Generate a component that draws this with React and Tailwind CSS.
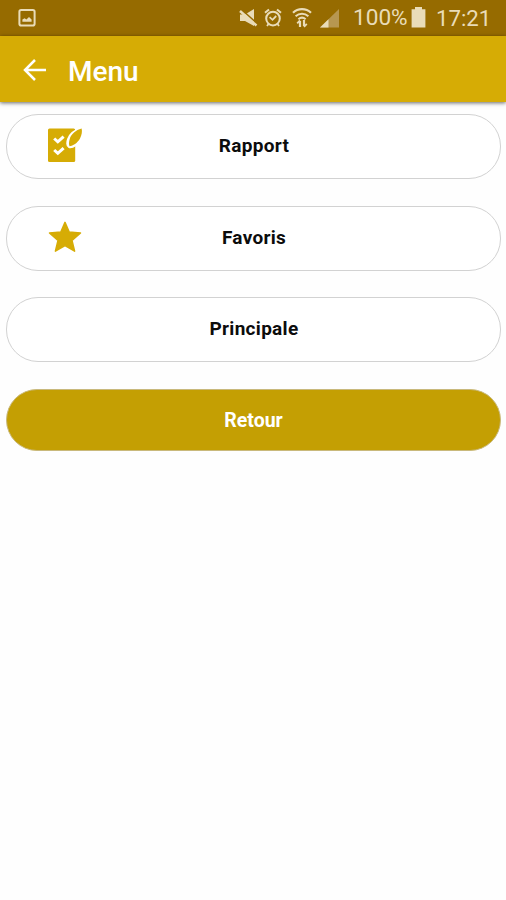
function Picture_Icon() {
  return (
    <svg className="w-[18px] h-[18px]" viewBox="0 0 18 18" fill="none">
      <rect x="1.4" y="1" width="15.2" height="15.6" rx="1.8" stroke="#e9dcb8" strokeWidth="2" />
      <path d="M4.4 12.8V10.6L6.6 9.2L8.4 10.6L11 8L13.6 10.4V12.8Z" fill="#e9dcb8" />
    </svg>
  );
}

function Mute_Icon() {
  return (
    <svg className="w-[19px] h-[20px]" viewBox="0 0 19 20" fill="none">
      <path d="M1 6.5H6L15 1V18L6 13H1Z" fill="#e9dcb8" />
      <path d="M2 1L18 15.5" stroke="#966b00" strokeWidth="1.6" />
      <path d="M1 3L17.5 17.5" stroke="#e9dcb8" strokeWidth="2.4" />
    </svg>
  );
}

function Alarm_Icon() {
  return (
    <svg className="w-[18px] h-[20px]" viewBox="0 0 18 20" fill="none" stroke="#e9dcb8">
      <circle cx="9" cy="10.6" r="6.8" strokeWidth="2" />
      <path d="M1 4.8L5 1.4M17 4.8L13 1.4" strokeWidth="2" />
      <path d="M5.6 9.2L8.5 11.8L12.2 8" strokeWidth="1.8" />
      <path d="M4.5 16L3 18M13.5 16L15 18" strokeWidth="1.8" />
    </svg>
  );
}

function Wifi_Icon() {
  return (
    <svg className="w-[20px] h-[20px]" viewBox="0 0 20 20" fill="none" stroke="#e9dcb8">
      <path d="M1 4.8C6 0 14 0 19 4.8" strokeWidth="2.2" />
      <path d="M3.6 8.2C7.3 4.8 12.7 4.8 16.4 8.2" strokeWidth="2" />
      <path d="M6.4 11.2C8.6 9.3 11.4 9.3 13.6 11.2" strokeWidth="2" />
      <path d="M8 19V13M12 12V18" strokeWidth="2.2" />
      <path d="M5.2 15.4L8 12.4M12 18.8L14.8 15.8" strokeWidth="1.8" />
    </svg>
  );
}

function Signal_Icon() {
  return (
    <svg className="w-[20px] h-[19px]" viewBox="0 0 20 19">
      <path d="M0 18.5L19 0V18.5Z" fill="#b79750" />
      <path d="M0 18.5L8.5 10.2V18.5Z" fill="#e9dcb8" />
    </svg>
  );
}

function Battery_Icon() {
  return (
    <svg className="w-[15px] h-[22px]" viewBox="0 0 15 22">
      <path d="M4 1H11V3.2H14.4V21.5H0.6V3.2H4Z" fill="#e9dcb8" />
    </svg>
  );
}

function Status_Bar() {
  return (
    <div className="h-[36px] flex items-center bg-[#966b00] pl-[18px] text-[#e9dcb8]">
      <Picture_Icon />
      <div className="ml-[203px] flex items-center">
        <Mute_Icon />
        <div className="ml-[6px]"><Alarm_Icon /></div>
        <div className="ml-[10px]"><Wifi_Icon /></div>
        <div className="ml-[8px]"><Signal_Icon /></div>
      </div>
      <span className="ml-[13px] mt-[1px] w-[55px] whitespace-nowrap text-[22.6px] leading-none">100%</span>
      <div className="ml-[3px] -mt-[2px]"><Battery_Icon /></div>
      <span className="ml-[10px] whitespace-nowrap text-[22.2px] leading-none">17:21</span>
    </div>
  );
}

function Header() {
  return (
    <div className="h-[66px] flex items-center bg-[#d6ac05] pl-[23px] shadow-[0_1px_4px_rgba(0,0,0,0.6)]">
      <svg className="mt-[1px] w-[24px] h-[22px]" viewBox="0 0 24 22" fill="none" stroke="white" strokeWidth="2.5">
        <path d="M23 11H2M12 1L2 11L12 21" />
      </svg>
      <h1 className="ml-[21px] mt-[5px] text-[28px] leading-none font-medium text-white">Menu</h1>
    </div>
  );
}

function Report_Icon() {
  return (
    <svg className="w-[36px] h-[36px]" viewBox="0 0 36 36" fill="none">
      <rect x="1" y="0.6" width="27.2" height="33.5" rx="1.5" fill="#d6ac05" />
      <path d="M7.2 10.5L10.8 13.8L16.6 8.6M7.2 22L10.8 25.3L16.6 20.1" stroke="white" strokeWidth="3" />
      <path
        d="M34.3 1.8C28.5 3 23.8 6.5 22 11.5C21 14.5 21.3 17.5 22.6 18.2C25.5 18.8 30.3 15.5 33 10.5C34.5 7.5 35 4.3 34.3 1.8Z"
        fill="#d6ac05"
        stroke="white"
        strokeWidth="4"
      />
      <path d="M34.6 0.6C28.8 2.2 24.2 6 22.6 11.4C21.8 14 21.8 16.6 22.6 18.2C26 17.8 30.4 15 33 10.4C34.8 7.2 35.4 3.6 34.6 0.6Z" fill="#d6ac05" />
    </svg>
  );
}

function Star_Icon() {
  return (
    <svg className="w-[36px] h-[36px]" viewBox="0 0 36 36">
      <path
        d="M18 3.4L22.2 13L33.5 14L25 21.4L27.6 32.2L18 26.6L8.4 32.2L11 21.4L2.5 14L13.8 13Z"
        fill="#d6ac05"
        stroke="#d6ac05"
        strokeWidth="1.5"
        strokeLinejoin="round"
      />
    </svg>
  );
}

function Menu_Button({ label, icon }) {
  return (
    <button className="w-full h-[65px] grid grid-cols-[1fr_auto_1fr] items-center rounded-[32px] border border-[#d2d2d2] bg-white pb-[1.4px] pl-[40px] pr-[32px] text-[19px] font-bold tracking-[0.3px] text-[#0c0c0c]">
      <span>{icon}</span>
      <span className="-ml-[7px] mt-[1px]">{label}</span>
    </button>
  );
}

export default function App() {
  return (
    <div className="w-full h-screen bg-[#fefefe] font-[Roboto,sans-serif]">
      <Status_Bar />
      <Header />
      <div className="flex flex-col gap-[26.5px] pt-[12px] pl-[6px] pr-[5px]">
        <Menu_Button label="Rapport" icon={<Report_Icon />} />
        <Menu_Button label="Favoris" icon={<Star_Icon />} />
        <Menu_Button label="Principale" />
        <button className="h-[62px] rounded-[31px] border border-[#c9b97c] bg-[#c49f03] pt-[2.5px] text-[19.5px] font-bold text-white">
          Retour
        </button>
      </div>
    </div>
  );
}
